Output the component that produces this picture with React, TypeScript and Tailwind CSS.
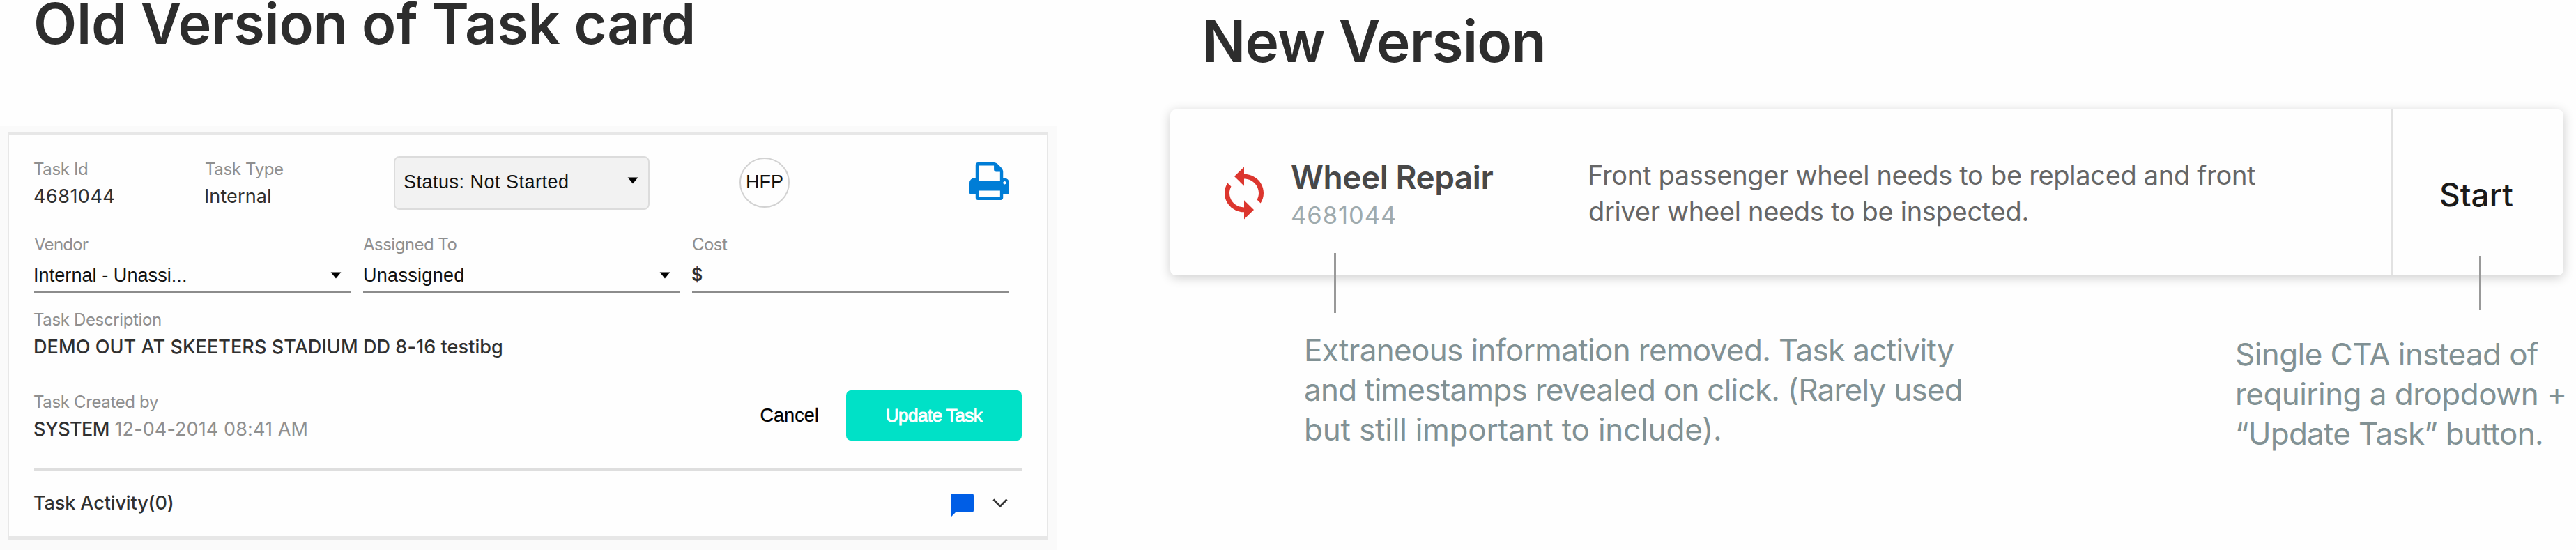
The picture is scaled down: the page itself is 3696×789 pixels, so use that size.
import type { ReactNode } from "react";

function Caret({ className = "" }: { className?: string }) {
  return (
    <svg viewBox="0 0 16 10" className={`h-[10px] w-[16px] shrink-0 ${className}`}>
      <path d="M0.6 0.4h14.8L8 9.6z" fill="#000" />
    </svg>
  );
}

function PrintIcon() {
  return (
    <svg viewBox="0 128 1664 1536" preserveAspectRatio="none" className="mt-[9px] h-[54px] w-[57px]" fill="#007dd6">
      <path d="M384 1536h896v-256H384v256zm0-640h896V512h-160q-40 0-68-28t-28-68V256H384v640zm1152 64q0-26-19-45t-45-19-45 19-19 45 19 45 45 19 45-19 19-45zm128 0v416q0 13-9.5 22.5t-22.5 9.5h-224v160q0 40-28 68t-68 28H352q-40 0-68-28t-28-68v-160H32q-13 0-22.5-9.5T0 1376V960q0-79 56.5-135.5T192 768h64V224q0-40 28-68t68-28h672q40 0 88 20t76 48l152 152q28 28 48 76t20 88v256h64q79 0 135.5 56.5T1664 960z" />
    </svg>
  );
}

function SyncIcon() {
  return (
    <svg viewBox="0 0 24 24" preserveAspectRatio="none" className="h-[82px] w-[84px]" fill="#dc362e">
      <path d="M12 4V1L8 5l4 4V6c3.31 0 6 2.69 6 6 0 1.01-.25 1.97-.7 2.8l1.46 1.46C19.54 15.03 20 13.57 20 12c0-4.42-3.58-8-8-8zm0 14c-3.31 0-6-2.69-6-6 0-1.01.25-1.97.7-2.8L5.24 7.74C4.46 8.97 4 10.43 4 12c0 4.42 3.58 8 8 8v3l4-4-4-4v3z" />
    </svg>
  );
}

function Label({ children, className = "" }: { children: ReactNode; className?: string }) {
  return (
    <div className={`text-[24px] tracking-[-0.36px] text-[#8f8f8f] ${className}`}>{children}</div>
  );
}

function OldTaskCard() {
  return (
    <div className="mt-[8px] ml-[11px] flex h-[585px] w-[1493px] flex-col border-x-2 border-y-[5px] border-[#e7e7e7] bg-[#fefefe] pl-[36px] text-[27px] text-[#303030]">
      <div className="mt-[30px] flex h-[77px]">
        <div className="w-[246px]">
          <Label className="-ml-px leading-[37px]">Task Id</Label>
          <div className="-ml-px leading-[42px] tracking-[0.5px]">4681044</div>
        </div>
        <div className="w-[270px]">
          <Label className="-ml-px leading-[37px]">Task Type</Label>
          <div className="-ml-[2px] leading-[42px] tracking-[0.11px]">Internal</div>
        </div>
        <div className="flex w-[367px] justify-between rounded-[8px] border-2 border-[#dcdcdc] bg-[#f2f2f2] pr-[14px] pl-[12px] font-['Liberation_Sans',sans-serif] text-[#111]">
          <span className="leading-[71px] tracking-[0.49px]">Status: Not Started</span>
          <Caret className="mt-[28px]" />
        </div>
        <div className="mt-[2px] ml-[129px] flex h-[72px] w-[72px] justify-center rounded-full border-2 border-[#d2d2d2] font-['Liberation_Sans',sans-serif] leading-[67px] text-[#111]">
          HFP
        </div>
        <div className="ml-[258px]">
          <PrintIcon />
        </div>
      </div>

      <div className="mt-[31px] flex gap-[18px]">
        <div className="w-[454px]">
          <Label className="leading-[37px] tracking-[-0.72px]">Vendor</Label>
          <div className="flex h-[51px] items-center justify-between border-b-[3px] border-[#8c8c8c] pr-[13px] font-['Liberation_Sans',sans-serif] text-[#111]">
            <span className="-ml-px pt-[3px] leading-[46px] tracking-[0.07px]">Internal - Unassi...</span>
            <Caret className="mt-[3px]" />
          </div>
        </div>
        <div className="w-[454px]">
          <Label className="leading-[37px] tracking-[-0.52px]">Assigned To</Label>
          <div className="flex h-[51px] items-center justify-between border-b-[3px] border-[#8c8c8c] pr-[13px] font-['Liberation_Sans',sans-serif] text-[#111]">
            <span className="pt-[3px] leading-[46px] tracking-[0.3px]">Unassigned</span>
            <Caret className="mt-[3px]" />
          </div>
        </div>
        <div className="w-[455px]">
          <Label className="leading-[37px] tracking-[-0.53px]">Cost</Label>
          <div className="h-[51px] border-b-[3px] border-[#8c8c8c]">
            <span className="-ml-px text-[25px] leading-[51px] font-semibold">$</span>
          </div>
        </div>
      </div>

      <div className="mt-[20px]">
        <Label className="-ml-px leading-[37px]">Task Description</Label>
        <div className="-ml-px leading-[42px] font-medium tracking-[0.08px]">
          DEMO OUT AT SKEETERS STADIUM DD 8-16 testibg
        </div>
      </div>

      <div className="mt-[41px] flex h-[72px] w-[1417px]">
        <div className="-ml-px flex-1">
          <Label className="leading-[33px]">Task Created by</Label>
          <div className="leading-[45px]">
            <span className="font-medium tracking-[-0.55px]">SYSTEM</span>{" "}
            <span className="tracking-[0.11px] text-[#8f8f8f]">12-04-2014 08:41 AM</span>
          </div>
        </div>
        <div className="mr-[39px] font-['Liberation_Sans',sans-serif] leading-[72px] tracking-[0.09px] text-black [-webkit-text-stroke:0.3px_black]">
          Cancel
        </div>
        <div className="w-[252px] rounded-[7px] bg-[#00e1c7] text-center font-['Liberation_Sans',sans-serif] text-[26px] leading-[73px] tracking-[-0.5px] text-white [-webkit-text-stroke:1px_white]">
          Update Task
        </div>
      </div>

      <div className="mt-[40px] h-[3px] w-[1417px] bg-[#dedede]" />

      <div className="flex h-[94px] w-[1397px] items-start">
        <div className="-ml-px flex-1 leading-[94px] font-medium tracking-[-0.1px]">Task Activity(0)</div>
        <svg viewBox="0 0 33 34" className="mt-[33px] h-[34px] w-[33px]" fill="#005ee6">
          <path d="M3 0h27a3 3 0 0 1 3 3v21a3 3 0 0 1-3 3H7L0 34V3a3 3 0 0 1 3-3z" />
        </svg>
        <svg viewBox="0 0 22 14" className="mt-[40px] ml-[27px] h-[14px] w-[22px]" fill="none" stroke="#333" strokeWidth="2.8">
          <path d="M1.4 1.4L11 11.2l9.6-9.8" />
        </svg>
      </div>
    </div>
  );
}

function NewTaskCard() {
  return (
    <div className="relative ml-[162px] flex h-[238px] w-[1999px] rounded-[8px] bg-[#fefefe] shadow-[0_3px_16px_rgba(0,0,0,0.2)]">
      <div className="flex w-[1754px] border-r-[3px] border-[#e2e2e2] pl-[64px]">
        <div className="mt-[79px]">
          <SyncIcon />
        </div>
        <div className="w-[452px] pl-[25px]">
          <div className="mt-[67px] text-[46px] leading-[60px] font-semibold tracking-[-0.45px] text-[#484848]">Wheel Repair</div>
          <div className="mt-[2px] text-[34.5px] leading-[45px] tracking-[0.98px] text-[#9eaaad]">4681044</div>
        </div>
        <div className="-ml-px mt-[68px] text-[38px] leading-[52px] text-[#666]">
          <div className="tracking-[-0.31px]">Front passenger wheel needs to be replaced and front</div>
          <div className="ml-px tracking-[-0.3px]">driver wheel needs to be inspected.</div>
        </div>
      </div>
      <div className="flex-1 pl-[67px] text-[46px] leading-[245px] font-medium text-[#1a1a1a]">Start</div>
      <div className="absolute top-[206px] left-[235px] h-[86px] w-[3px] bg-[#999]" />
      <div className="absolute top-[210px] left-[1878px] h-[78px] w-[3px] bg-[#999]" />
    </div>
  );
}

export default function App() {
  return (
    <div className="flex h-[789px] w-[3696px] overflow-hidden bg-[#fefefe] font-['Inter',sans-serif] whitespace-nowrap">
      <section className="w-[1517px]">
        <h1 className="h-[181px] pt-[2px] pl-[48px] text-[81px] leading-[64px] font-semibold tracking-[-0.22px] text-[#2d2d2d]">
          Old Version of Task card
        </h1>
        <div className="flex h-[608px] bg-[#fafafa]">
          <OldTaskCard />
        </div>
      </section>
      <section className="w-[2179px]">
        <h1 className="h-[157px] pt-[20px] pl-[208px] text-[82px] leading-[80px] font-semibold tracking-[-0.79px] text-[#2d2d2d]">
          New Version
        </h1>
        <NewTaskCard />
        <div className="flex text-[44px] leading-[57px] text-[#819194]">
          <p className="mt-[79px] ml-[354px] w-[1336px]">
            <span className="block tracking-[-0.66px]">Extraneous information removed. Task activity</span>
            <span className="block tracking-[-0.75px]">and timestamps revealed on click. (Rarely used</span>
            <span className="block tracking-[-0.19px]">but still important to include).</span>
          </p>
          <p className="mt-[85px]">
            <span className="block tracking-[-0.57px]">Single CTA instead of</span>
            <span className="block tracking-[-0.55px]">requiring a dropdown +</span>
            <span className="block tracking-[-0.72px]">“Update Task” button.</span>
          </p>
        </div>
      </section>
    </div>
  );
}
